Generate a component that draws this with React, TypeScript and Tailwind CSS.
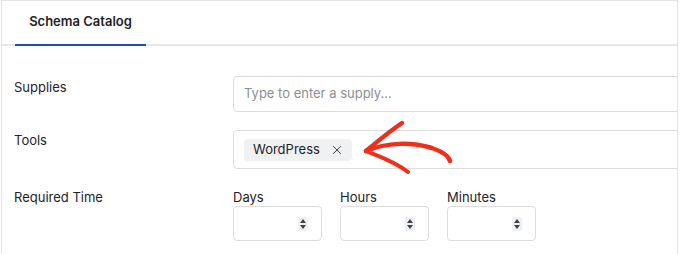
import { X } from 'lucide-react'

function Spinner() {
  return (
    <span className="flex h-[14px] w-[10px] flex-col items-center justify-center gap-[2px] rounded-[2px] bg-[#eef0f2]">
      <svg width="6" height="4" viewBox="0 0 6 4" aria-hidden="true">
        <path d="M3 0 L6 4 L0 4 Z" fill="#3c434a" />
      </svg>
      <svg width="6" height="4" viewBox="0 0 6 4" aria-hidden="true">
        <path d="M0 0 L6 0 L3 4 Z" fill="#3c434a" />
      </svg>
    </span>
  )
}

function NumberField({ label }: { label: string }) {
  return (
    <div className="flex w-[89px] shrink-0 flex-col">
      <span className="text-[13px] leading-[18px] text-[#1d2327]">{label}</span>
      <div className="flex h-[35px] items-center justify-end rounded-[4px] border border-[#dcdcde] pr-[13px]">
        <Spinner />
      </div>
    </div>
  )
}

function Arrow() {
  return (
    <svg
      className="pointer-events-none absolute left-[355px] top-[115px]"
      width="105"
      height="65"
      viewBox="355 115 105 65"
      aria-hidden="true"
    >
      <g fill="none" stroke="#ef2f1c" strokeLinecap="round" strokeLinejoin="round">
        <path d="M364 150 C376 140 388 130 400 122" strokeWidth="4.5" />
        <path d="M364 150 C385 141 410 141 430 147 C441 151 447 155 448 160" strokeWidth="4.5" />
        <path d="M364 150 C376 155 392 160 406 171" strokeWidth="4" />
      </g>
    </svg>
  )
}

export default function App() {
  return (
    <div className="h-[254px] w-[680px] overflow-hidden bg-white font-['Inter',sans-serif]">
      <div className="relative ml-px h-[260px] w-[677px] overflow-hidden border-x border-t border-[#e2e4e7]">
        <div className="flex h-[45px] border-b-2 border-[#e6e7e9] pl-[13px]">
          <div className="-mb-[2px] flex w-[131px] items-center justify-center border-b-2 border-[#2145c9] pb-[2px]">
            <span className="text-[13px] font-semibold text-[#1d2327]">Schema Catalog</span>
          </div>
        </div>

        <div className="flex flex-col pl-[12px]">
          <div className="mt-[30px] flex">
            <span className="w-[219px] shrink-0 pt-[2px] text-[13px] leading-[18px] text-[#1d2327]">Supplies</span>
            <div className="flex h-[36px] w-[470px] shrink-0 items-center rounded-[4px] border border-[#dcdcde] px-[10px] text-[13px] text-[#8c8f94]">
              Type to enter a supply...
            </div>
          </div>

          <div className="mt-[18px] flex">
            <span className="w-[219px] shrink-0 pt-[1px] text-[13px] leading-[18px] text-[#1d2327]">Tools</span>
            <div className="flex h-[39px] w-[470px] shrink-0 items-center rounded-[4px] border border-[#dcdcde] px-[10px]">
              <span className="flex h-[22px] items-center gap-[10px] rounded-[4px] bg-[#f0f1f3] pl-[9px] pr-[8px] text-[13px] text-[#1d2327]">
                WordPress
                <X size={14} strokeWidth={1.7} className="text-[#3c434a]" />
              </span>
            </div>
          </div>

          <div className="mt-[19px] flex">
            <span className="w-[219px] shrink-0 text-[13px] leading-[18px] text-[#1d2327]">Required Time</span>
            <div className="flex gap-[18px]">
              <NumberField label="Days" />
              <NumberField label="Hours" />
              <NumberField label="Minutes" />
            </div>
          </div>
        </div>

        <Arrow />
      </div>
    </div>
  )
}
